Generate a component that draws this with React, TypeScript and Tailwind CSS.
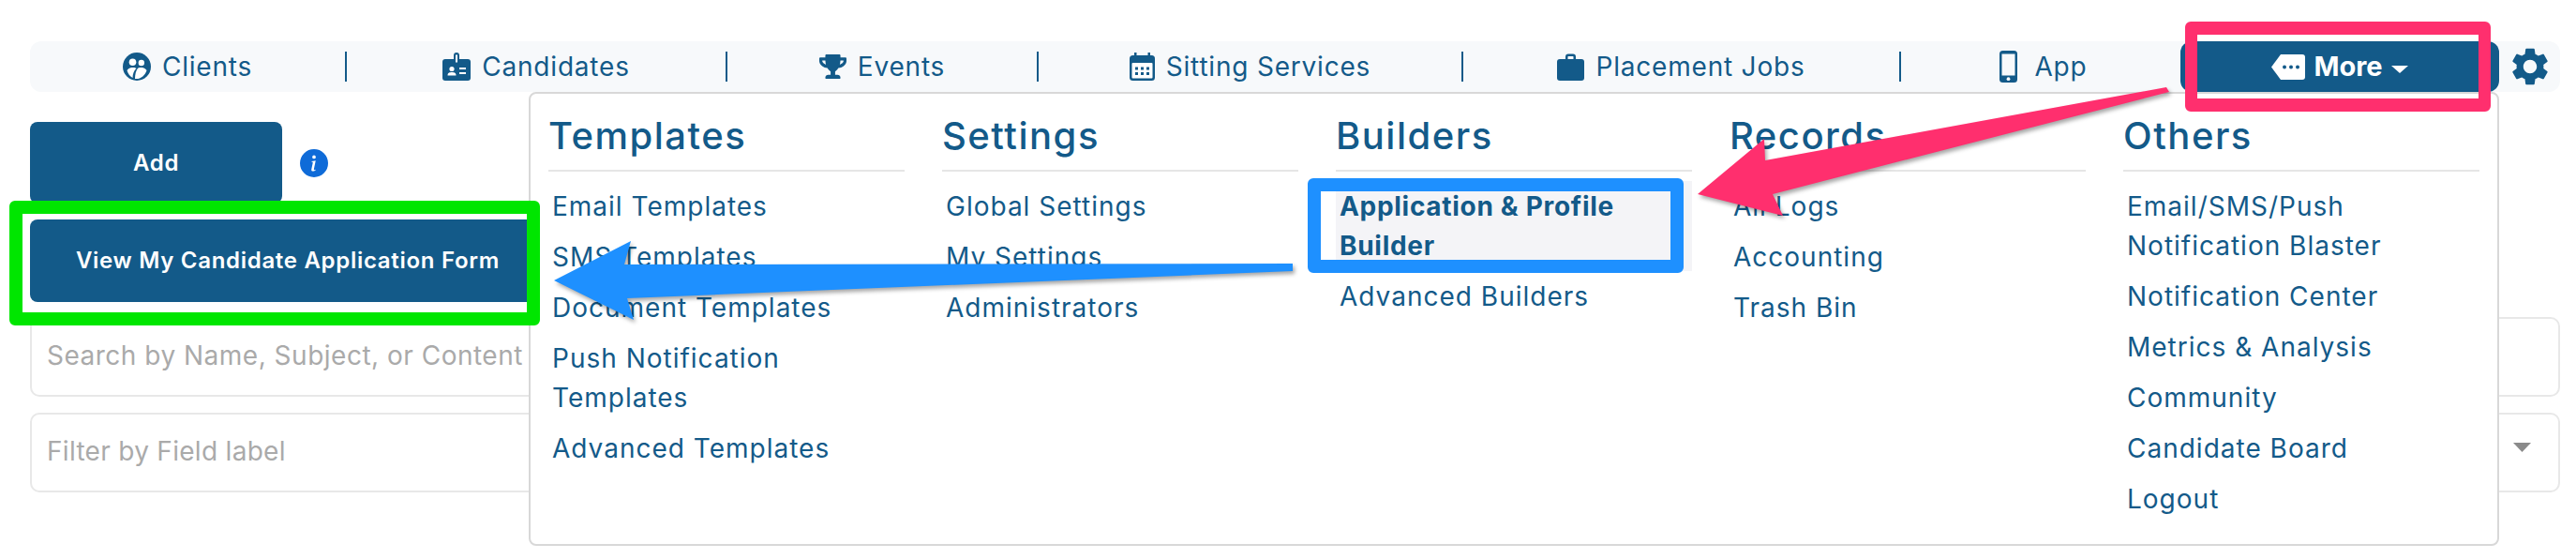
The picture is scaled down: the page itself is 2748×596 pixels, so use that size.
import { FaTrophy } from "react-icons/fa"
import { MdSettings } from "react-icons/md"
import { BsInfoCircleFill } from "react-icons/bs"

function ClientsIcon() {
  return (
    <svg viewBox="0 0 30 30" className="w-[30px] h-[30px]">
      <circle cx="15" cy="15" r="15" fill="#135a89" />
      <circle cx="10.5" cy="10.2" r="3.8" fill="#fff" />
      <circle cx="19.8" cy="11" r="3.2" fill="#fff" />
      <path d="M4.5 19 C6 16.5 9 16 11 16 C12.5 16 14 16.5 14.5 17 C12 19 10.5 23 10.5 27 C7.5 25.5 5.5 22.5 4.5 19Z" fill="#fff" />
      <path d="M25.5 19 C24 16.5 21 16 19 16 C17.5 16 16.5 16.3 16 16.8 C14 19.5 13 23 13 28 C18.5 28.8 24 24.5 25.5 19Z" fill="#fff" />
    </svg>
  )
}

function BadgeIcon() {
  return (
    <svg viewBox="0 0 30 30" className="w-[30px] h-[30px]">
      <rect x="0" y="7" width="30" height="23" rx="3" fill="#135a89" />
      <rect x="12" y="0" width="6" height="13" rx="3" fill="#135a89" />
      <rect x="14" y="2.5" width="2" height="8" fill="#fff" />
      <circle cx="10" cy="17.5" r="2.6" fill="#fff" />
      <path d="M5.5 24.5 C5.5 21.5 7.5 21 10 21 C12.5 21 14.5 21.5 14.5 24.5Z" fill="#fff" />
      <rect x="18" y="16" width="7" height="2" fill="#fff" />
      <rect x="18" y="21" width="7" height="2" fill="#fff" />
    </svg>
  )
}

function CalendarIcon() {
  const dots = [
    [6, 17], [12, 17], [18, 17],
    [6, 22.5], [12, 22.5], [18, 22.5],
  ]
  return (
    <svg viewBox="0 0 27 30" className="w-[27px] h-[30px]">
      <rect x="5" y="0" width="2.5" height="6" fill="#135a89" />
      <rect x="19.5" y="0" width="2.5" height="6" fill="#135a89" />
      <rect x="0" y="3" width="27" height="27" rx="3.5" fill="#135a89" />
      <rect x="2.5" y="11" width="22" height="16.5" rx="1" fill="#fff" />
      {dots.map(([x, y]) => (
        <rect key={`${x}-${y}`} x={x} y={y - 1.5} width="3" height="3" fill="#135a89" />
      ))}
    </svg>
  )
}

function SuitcaseIcon() {
  return (
    <svg viewBox="0 0 29 29" className="w-[29px] h-[29px]">
      <path d="M9 7 V3.5 C9 1.5 10 0.5 12 0.5 H17 C19 0.5 20 1.5 20 3.5 V7 H17.5 V3.5 C17.5 3.2 17.3 3 17 3 H12 C11.7 3 11.5 3.2 11.5 3.5 V7Z" fill="#135a89" />
      <rect x="0" y="6" width="29" height="23" rx="3" fill="#135a89" />
    </svg>
  )
}

function PhoneIcon() {
  return (
    <svg viewBox="0 0 19 34" className="w-[19px] h-[34px]">
      <rect x="0" y="0" width="19" height="34" rx="3.5" fill="#135a89" />
      <rect x="2.5" y="3.5" width="14" height="23" fill="#f7f9fb" />
      <circle cx="9.5" cy="30.2" r="1.9" fill="#f7f9fb" />
    </svg>
  )
}

function MoreTagIcon() {
  return (
    <svg viewBox="0 0 36 27" className="w-[36px] h-[27px]">
      <path d="M10 0 H33 C35 0 36 1 36 3 V24 C36 26 35 27 33 27 H10 L0 13.5Z" fill="#fff" />
      <circle cx="14" cy="13.5" r="2" fill="#135a89" />
      <circle cx="21" cy="13.5" r="2" fill="#135a89" />
      <circle cx="28" cy="13.5" r="2" fill="#135a89" />
    </svg>
  )
}

const navItems = [
  { label: "Clients", icon: <ClientsIcon />, width: "w-[336px]" },
  { label: "Candidates", icon: <BadgeIcon />, width: "w-[404px]" },
  { label: "Events", icon: <FaTrophy className="w-[29px] h-[26px] text-[#135a89]" />, width: "w-[330px]" },
  { label: "Sitting Services", icon: <CalendarIcon />, width: "w-[451px]" },
  { label: "Placement Jobs", icon: <SuitcaseIcon />, width: "w-[465px]" },
]

const menuColumns = [
  {
    title: "Templates",
    items: ["Email Templates", "SMS Templates", "Document Templates", "Push Notification Templates", "Advanced Templates"],
  },
  { title: "Settings", items: ["Global Settings", "My Settings", "Administrators"] },
  { title: "Builders", items: ["Application & Profile Builder", "Advanced Builders"] },
  { title: "Records", items: ["All Logs", "Accounting", "Trash Bin"] },
  {
    title: "Others",
    items: ["Email/SMS/Push Notification Blaster", "Notification Center", "Metrics & Analysis", "Community", "Candidate Board", "Logout"],
  },
]

function Menu() {
  return (
    <div className="absolute left-[564px] top-[98px] w-[2102px] h-[484px] bg-white border-2 border-[#d8d8d8] rounded-lg pl-[19px] grid grid-cols-[repeat(5,380px)] gap-x-[40px] content-start">
      {menuColumns.map((col) => (
        <div key={col.title}>
          <h3 className="h-[83px] pt-[20px] border-b-2 border-[#e6e6e6] text-[40px] leading-[50px] font-medium tracking-[1.5px] text-[#135a89]">
            {col.title}
          </h3>
          <ul className="mt-[10px]">
            {col.items.map((item) => {
              const active = item.startsWith("Application")
              return (
                <li
                  key={item}
                  className={
                    active
                      ? "px-[4px] py-[6px] text-[28px] leading-[42px] font-bold tracking-[0.7px] text-[#135a89] bg-[#f4f4f7]"
                      : "px-[4px] py-[6px] text-[28px] leading-[42px] tracking-[1px] text-[#135a89]"
                  }
                >
                  {item}
                </li>
              )
            })}
          </ul>
        </div>
      ))}
    </div>
  )
}

function Annotations() {
  return (
    <>
      <div className="absolute left-[2331px] top-[23px] w-[326px] h-[96px] border-x-[13px] border-y-[14px] border-[#ff2f6e] rounded-md" />
      <div className="absolute left-[10px] top-[214px] w-[566px] h-[133px] border-[14px] border-[#00e600] rounded-md" />
      <div className="absolute left-[1395px] top-[190px] w-[401px] h-[101px] border-[14px] border-[#1e90ff] rounded-md" />
      <svg className="absolute left-0 top-0 w-[2748px] h-[596px] pointer-events-none" viewBox="0 0 2748 596">
        <polygon
          points="2311,93 1883,171 1882,148 1811,207 1902,230 1891,207 2314,98"
          fill="#ff2f6e"
          className="drop-shadow-[2px_3px_2px_rgba(0,0,0,0.35)]"
        />
        <polygon
          points="1379,281 666,282 673,257 591,299 676,341 669,318 1379,289"
          fill="#1e90ff"
          className="drop-shadow-[2px_3px_2px_rgba(0,0,0,0.35)]"
        />
      </svg>
    </>
  )
}

export default function App() {
  return (
    <div className="relative w-[2748px] h-[596px] overflow-hidden bg-white font-['Inter',sans-serif] text-[28px] tracking-[0.8px] text-[#135a89]">
      <div className="pl-[32px] pr-[17px] pt-[44px]">
        <nav className="flex items-center h-[54px] bg-[#f7f9fb] rounded-xl">
          {navItems.map((item) => (
            <div key={item.label} className="contents">
              <div className={`${item.width} flex items-center justify-center gap-[12px]`}>
                {item.icon}
                <span>{item.label}</span>
              </div>
              <div className="w-[2px] h-[32px] bg-[#135a89]" />
            </div>
          ))}
          <div className="w-[298px] flex items-center justify-center gap-[18px] pl-[6px]">
            <PhoneIcon />
            <span>App</span>
          </div>
          <button className="w-[340px] h-[54px] bg-[#135a89] rounded-xl flex items-center justify-center gap-[9px] text-white text-[29px] font-bold tracking-normal">
            <MoreTagIcon />
            <span>More</span>
            <svg viewBox="0 0 18 8" className="w-[18px] h-[8px] mt-[6px]">
              <polygon points="0,0 18,0 9,8" fill="#fff" />
            </svg>
          </button>
          <MdSettings className="w-[48px] h-[48px] ml-[9px] text-[#135a89]" />
        </nav>

        <div className="flex items-center gap-[19px] mt-[32px]">
          <button className="w-[269px] h-[87px] bg-[#135a89] rounded-lg text-white text-[24px] font-semibold tracking-[0.7px]">
            Add
          </button>
          <BsInfoCircleFill className="w-[30px] h-[30px] text-[#0f6bd8]" />
        </div>

        <button className="block w-[550px] h-[88px] mt-[17px] bg-[#135a89] rounded-lg text-white text-[24px] font-semibold tracking-[0.7px]">
          View My Candidate Application Form
        </button>

        <div className="h-[85px] mt-[16px] border-2 border-[#e8e8e8] rounded-[10px] pl-[16px] pt-[18px] text-[28px] leading-[42px] tracking-[0.5px] text-[#aaaaaa]">
          Search by Name, Subject, or Content
        </div>

        <div className="flex justify-between h-[85px] mt-[17px] border-2 border-[#e8e8e8] rounded-[10px] pl-[16px] pr-[29px] pt-[18px] text-[28px] leading-[42px] tracking-[0.3px] text-[#aaaaaa]">
          <span>Filter by Field label</span>
          <svg viewBox="0 0 19 10" className="w-[19px] h-[10px] mt-[12px]">
            <polygon points="0,0 19,0 9.5,10" fill="#8a8a8a" />
          </svg>
        </div>
      </div>

      <Menu />
      <Annotations />
    </div>
  )
}
